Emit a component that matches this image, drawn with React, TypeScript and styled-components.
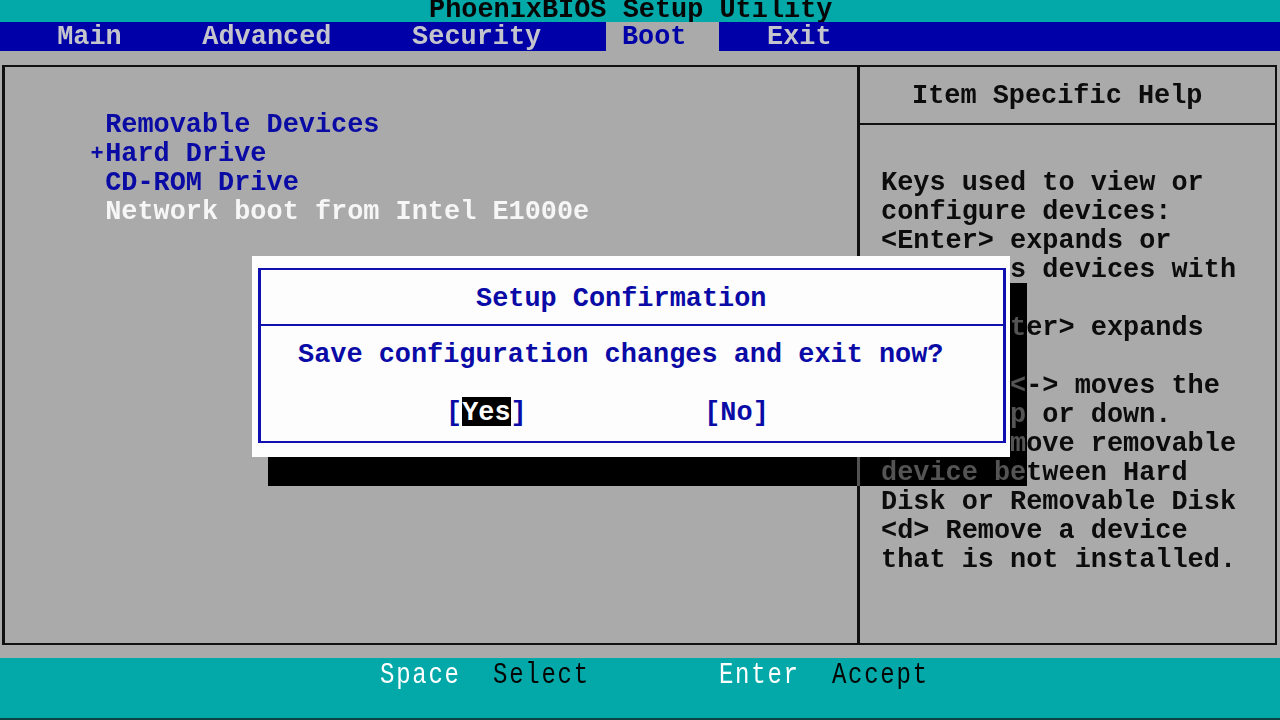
import React from "react";
import styled, { createGlobalStyle } from "styled-components";

const CELL = 16.14;
const c = (n: number) => `${(n * CELL).toFixed(2)}px`;

const GlobalStyle = createGlobalStyle`
  html, body { margin: 0; padding: 0; background: #aaaaaa; }
  body { width: 1280px; height: 720px; overflow: hidden; }
`;

const Screen = styled.div`
  position: relative;
  width: 1280px;
  height: 720px;
  overflow: hidden;
  display: flex;
  flex-direction: column;
  background: #aaaaaa;
  font-family: "Liberation Mono", "DejaVu Sans Mono", monospace;
  font-weight: 700;
  font-size: 26.9px;
  line-height: 29px;
  white-space: pre;
`;

const TitleBar = styled.header`
  flex: none;
  height: 22px;
  overflow: hidden;
  padding-left: 429px;
  background: #03a9a9;
  color: #060606;
`;

const TitleText = styled.div`
  height: 20px;
  line-height: 20px;
`;

const MenuBar = styled.nav`
  flex: none;
  height: 29px;
  display: flex;
  padding-left: 41px;
  background: #0000a8;
`;

const MenuTab = styled.div<{ $active?: boolean }>`
  box-sizing: border-box;
  height: 29px;
  padding: 2px ${c(2)} 0 ${c(1)};
  margin-right: ${c(2)};
  line-height: 26px;
  color: ${(p) => (p.$active ? "#0000a8" : "#c4c4cc")};
  background: ${(p) => (p.$active ? "#aaaaaa" : "transparent")};
`;

const Content = styled.main`
  flex: 1;
  min-height: 0;
  padding: 14px 3px 13px 2px;
`;

const Frame = styled.section`
  box-sizing: border-box;
  height: 100%;
  display: grid;
  grid-template-columns: 852px 1fr;
  border: 2px solid #101010;
  border-left-width: 3px;
`;

const MainPanel = styled.div`
  padding: 44px 0 0 84px;
  display: flex;
  flex-direction: column;
`;

const BootItem = styled.div<{ $selected?: boolean }>`
  display: flex;
  height: 29px;
  color: ${(p) => (p.$selected ? "#f6f6f6" : "#0a0aa4")};
`;

const Marker = styled.span`
  width: ${c(1)};
  text-align: center;
  font-size: 22px;
`;

const HelpPanel = styled.aside`
  display: flex;
  flex-direction: column;
  border-left: 3px solid #101010;
  color: #0c0c0c;
`;

const HelpHeader = styled.div`
  height: 56px;
  padding-left: 52px;
  border-bottom: 2px solid #101010;
  display: flex;
  align-items: flex-start;
`;

const HelpHeaderText = styled.span`
  margin-top: 15px;
`;

const HelpBody = styled.div`
  padding: 44px 0 0 21px;
  display: flex;
  flex-direction: column;
`;

const HelpLine = styled.div`
  height: 29px;
`;

const Footer = styled.footer`
  flex: none;
  height: 58px;
  padding: 2px 0 0 380px;
  background: #03a9a9;
  border-bottom: 2px solid #0d4343;
  display: flex;
  align-items: flex-start;
`;

const FooterWord = styled.span<{ $key?: boolean; $gap: number }>`
  display: inline-block;
  font-weight: 400;
  font-size: 24px;
  letter-spacing: ${(CELL - 14.4).toFixed(2)}px;
  line-height: 29px;
  transform: scaleY(1.25);
  margin-right: ${(p) => c(p.$gap)};
  color: ${(p) => (p.$key ? "#ffffff" : "#050505")};
`;

const ShadowLayer = styled.div<{ $mode: "difference" | "multiply" }>`
  position: absolute;
  left: 268px;
  top: 283px;
  width: 759px;
  height: 203px;
  mix-blend-mode: ${(p) => p.$mode};
  background: ${(p) => (p.$mode === "difference" ? "#aaaaaa" : "#888888")};
`;

const Dialog = styled.div`
  position: absolute;
  left: 252px;
  top: 256px;
  width: 758px;
  height: 201px;
  box-sizing: border-box;
  padding: 12px 4px 14px 6px;
  background: #fdfdfd;
  color: #0a0aa6;
`;

const DialogBox = styled.div`
  box-sizing: border-box;
  height: 100%;
  display: flex;
  flex-direction: column;
  border: 2px solid #1010b0;
  border-left-width: 3px;
  border-right-width: 3px;
`;

const DialogTitle = styled.div`
  height: 56px;
  box-sizing: border-box;
  padding: 15px 0 0 215px;
  border-bottom: 2px solid #1010b0;
`;

const DialogBody = styled.div`
  display: flex;
  flex-direction: column;
  gap: 29px;
  padding-top: 15px;
`;

const DialogMessage = styled.div`
  padding-left: 37px;
  height: 29px;
`;

const ButtonRow = styled.div`
  display: flex;
  height: 29px;
  padding-left: 185px;
`;

const Bracket = styled.span<{ $gapAfter?: number }>`
  margin-right: ${(p) => c(p.$gapAfter ?? 0)};
`;

const Highlight = styled.span`
  box-sizing: border-box;
  height: 29px;
  margin-top: -2px;
  padding-top: 2px;
  background: #000000;
  color: #ffffff;
`;

const MENU = [
  { label: "Main" },
  { label: "Advanced" },
  { label: "Security" },
  { label: "Boot", active: true },
  { label: "Exit" },
];

const BOOT_ITEMS = [
  { marker: "", label: "Removable Devices" },
  { marker: "+", label: "Hard Drive" },
  { marker: "", label: "CD-ROM Drive" },
  { marker: "", label: "Network boot from Intel E1000e", selected: true },
];

const HELP = [
  "Keys used to view or",
  "configure devices:",
  "<Enter> expands or",
  "collapses devices with",
  "a + or -",
  "<Ctrl+Enter> expands",
  "all",
  "<+> and <-> moves the",
  "device up or down.",
  "<n> May move removable",
  "device between Hard",
  "Disk or Removable Disk",
  "<d> Remove a device",
  "that is not installed.",
];

export default function App() {
  return (
    <>
      <GlobalStyle />
      <Screen>
        <TitleBar>
          <TitleText>PhoenixBIOS Setup Utility</TitleText>
        </TitleBar>
        <MenuBar>
          {MENU.map((m) => (
            <MenuTab key={m.label} $active={m.active}>
              {m.label}
            </MenuTab>
          ))}
        </MenuBar>
        <Content>
          <Frame>
            <MainPanel>
              {BOOT_ITEMS.map((item) => (
                <BootItem key={item.label} $selected={item.selected}>
                  <Marker>{item.marker}</Marker>
                  <span>{item.label}</span>
                </BootItem>
              ))}
            </MainPanel>
            <HelpPanel>
              <HelpHeader>
                <HelpHeaderText>Item Specific Help</HelpHeaderText>
              </HelpHeader>
              <HelpBody>
                {HELP.map((line, i) => (
                  <HelpLine key={i}>{line}</HelpLine>
                ))}
              </HelpBody>
            </HelpPanel>
          </Frame>
        </Content>
        <Footer>
          <FooterWord $key $gap={2}>Space</FooterWord>
          <FooterWord $gap={8}>Select</FooterWord>
          <FooterWord $key $gap={2}>Enter</FooterWord>
          <FooterWord $gap={0}>Accept</FooterWord>
        </Footer>

        <ShadowLayer $mode="difference" />
        <ShadowLayer $mode="multiply" />

        <Dialog>
          <DialogBox>
            <DialogTitle>Setup Confirmation</DialogTitle>
            <DialogBody>
              <DialogMessage>Save configuration changes and exit now?</DialogMessage>
              <ButtonRow>
                <Bracket>[</Bracket>
                <Highlight>Yes</Highlight>
                <Bracket $gapAfter={11}>]</Bracket>
                <Bracket>[No]</Bracket>
              </ButtonRow>
            </DialogBody>
          </DialogBox>
        </Dialog>
      </Screen>
    </>
  );
}
